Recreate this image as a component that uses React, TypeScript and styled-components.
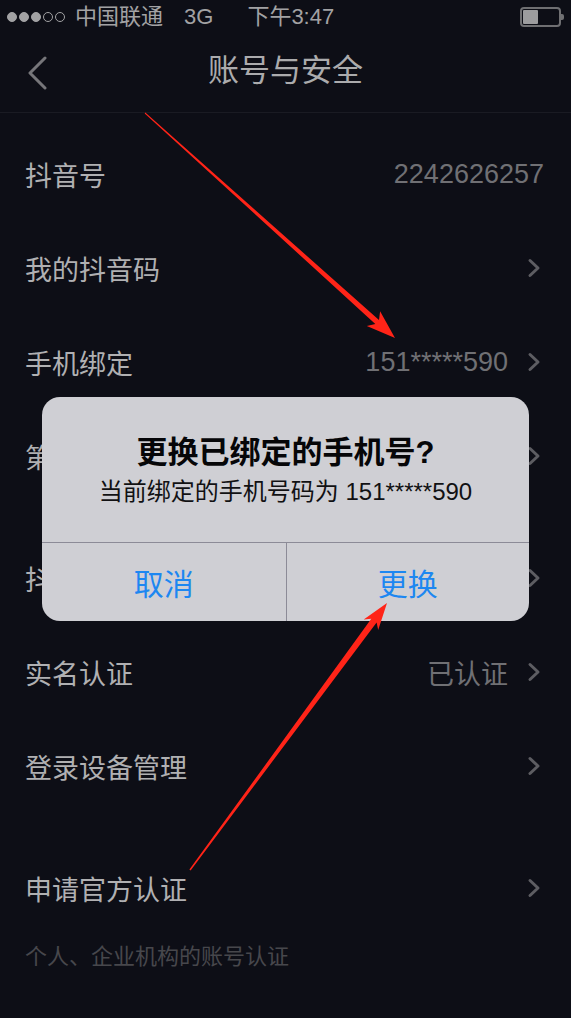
import React from "react";
import styled, { createGlobalStyle } from "styled-components";

const GlobalStyle = createGlobalStyle`
  html, body {
    margin: 0;
    padding: 0;
    background: #0d0e16;
  }
  body {
    font-family: "Liberation Sans", "Noto Sans CJK SC", sans-serif;
    -webkit-font-smoothing: antialiased;
  }
`;

const Screen = styled.div`
  position: relative;
  width: 100%;
  min-height: 1018px;
  background: #0d0e16;
  overflow: hidden;
`;

/* status bar */

const StatusBar = styled.div`
  display: flex;
  align-items: center;
  height: 34px;
  padding: 0 7px;
  color: #a2a2a4;
  font-size: 22px;
`;

const Signal = styled.div`
  display: flex;
  gap: 2px;
`;

const Dot = styled.span<{ $on: boolean }>`
  width: 8px;
  height: 8px;
  border-radius: 50%;
  border: 1.5px solid #a2a2a4;
  background: ${(p) => (p.$on ? "#a2a2a4" : "transparent")};
`;

const StatusText = styled.span<{ $gap: number }>`
  margin-left: ${(p) => p.$gap}px;
  line-height: 32px;
`;

const Battery = styled.div`
  margin-left: auto;
  display: flex;
  align-items: center;
`;

const BatteryBody = styled.div`
  width: 35px;
  height: 14px;
  border: 2px solid #6f6f72;
  border-radius: 4px;
  padding: 1px;
  display: flex;
`;

const BatteryFill = styled.div`
  width: 15px;
  background: #9c9c9e;
  border-radius: 1px;
`;

const BatteryNub = styled.div`
  width: 3px;
  height: 6px;
  background: #6f6f72;
  border-radius: 0 2px 2px 0;
`;

/* navigation */

const NavBar = styled.div`
  position: relative;
  display: flex;
  align-items: center;
  justify-content: center;
  height: 78px;
  border-bottom: 1px solid #1a1b23;
`;

const BackButton = styled.div`
  position: absolute;
  left: 26px;
  top: 22px;
  width: 24px;
  height: 34px;
`;

const NavTitle = styled.div`
  color: #ababad;
  font-size: 31px;
  line-height: 36px;
  margin-top: -4px;
`;

/* settings list */

const List = styled.div`
  padding-top: 14px;
`;

const Section = styled.div`
  & + & {
    margin-top: 28px;
  }
`;

const Row = styled.div<{ $arrow: boolean }>`
  display: flex;
  align-items: center;
  height: 94px;
  padding: 0 ${(p) => (p.$arrow ? 30 : 27)}px 0 25px;
`;

const Label = styled.div`
  flex: 1;
  color: #b0b0b2;
  font-size: 27px;
`;

const Value = styled.div`
  color: #707074;
  font-size: 27px;
`;

const Chevron = styled.svg`
  margin-left: 19px;
  width: 14px;
  height: 20px;
`;

const Note = styled.div`
  padding: 8px 25px 0;
  color: #47474c;
  font-size: 22px;
  line-height: 27px;
`;

/* alert */

const Backdrop = styled.div`
  position: absolute;
  inset: 0;
  display: flex;
  align-items: center;
  justify-content: center;
`;

const Alert = styled.div`
  width: 487px;
  border-radius: 18px;
  background: #cfcfd4;
  overflow: hidden;
`;

const AlertBody = styled.div`
  height: 145px;
  display: flex;
  flex-direction: column;
  align-items: center;
  justify-content: center;
  gap: 6px;
`;

const AlertTitle = styled.div`
  color: #060608;
  font-size: 31px;
  font-weight: 700;
  line-height: 37px;
`;

const AlertMessage = styled.div`
  color: #111113;
  font-size: 24px;
  line-height: 29px;
`;

const AlertActions = styled.div`
  display: grid;
  grid-template-columns: 1fr 1fr;
  border-top: 1px solid #8c8b97;
`;

const AlertButton = styled.div`
  height: 78px;
  display: flex;
  align-items: center;
  justify-content: center;
  color: #1d87f1;
  font-size: 30px;

  & + & {
    border-left: 1px solid #8c8b97;
  }
`;

/* red markers drawn on top */

const Markup = styled.svg`
  position: absolute;
  left: 0;
  top: 0;
  pointer-events: none;
`;

type Item = { label: string; value?: string; arrow: boolean };

const sections: Item[][] = [
  [
    { label: "抖音号", value: "2242626257", arrow: false },
    { label: "我的抖音码", arrow: true },
    { label: "手机绑定", value: "151*****590", arrow: true },
    { label: "第三方账号绑定", arrow: true },
  ],
  [
    { label: "抖音密码", arrow: true },
    { label: "实名认证", value: "已认证", arrow: true },
    { label: "登录设备管理", arrow: true },
  ],
  [{ label: "申请官方认证", arrow: true }],
];

// tapered shaft with a swept-back head, tail -> tip
function arrowShape(
  x1: number,
  y1: number,
  x2: number,
  y2: number,
  tailW: number,
  neckW: number,
  headLen: number,
  headW: number
): string {
  const len = Math.hypot(x2 - x1, y2 - y1);
  const ux = (x2 - x1) / len;
  const uy = (y2 - y1) / len;
  const nx = -uy;
  const ny = ux;
  const neckX = x2 - ux * headLen;
  const neckY = y2 - uy * headLen;
  const barbX = neckX - ux * 5;
  const barbY = neckY - uy * 5;
  const pts = [
    [x1 + (nx * tailW) / 2, y1 + (ny * tailW) / 2],
    [neckX + (nx * neckW) / 2, neckY + (ny * neckW) / 2],
    [barbX + (nx * headW) / 2, barbY + (ny * headW) / 2],
    [x2, y2],
    [barbX - (nx * headW) / 2, barbY - (ny * headW) / 2],
    [neckX - (nx * neckW) / 2, neckY - (ny * neckW) / 2],
    [x1 - (nx * tailW) / 2, y1 - (ny * tailW) / 2],
  ];
  return pts.map(([x, y]) => `${x.toFixed(1)},${y.toFixed(1)}`).join(" ");
}

const RowChevron = () => (
  <Chevron viewBox="0 0 14 20">
    <path d="M3 2.5 L11 10 L3 17.5" fill="none" stroke="#5d5d62" strokeWidth="3" strokeLinecap="round" strokeLinejoin="round" />
  </Chevron>
);

const App: React.FC = () => {
  return (
    <Screen>
      <GlobalStyle />
      <StatusBar>
        <Signal>
          {[true, true, true, false, false].map((on, i) => (
            <Dot key={i} $on={on} />
          ))}
        </Signal>
        <StatusText $gap={10}>中国联通</StatusText>
        <StatusText $gap={21}>3G</StatusText>
        <StatusText $gap={34}>下午3:47</StatusText>
        <Battery>
          <BatteryBody>
            <BatteryFill />
          </BatteryBody>
          <BatteryNub />
        </Battery>
      </StatusBar>

      <NavBar>
        <BackButton>
          <svg width="24" height="34" viewBox="0 0 24 34">
            <path d="M19 2 L4 17 L19 32" fill="none" stroke="#76767a" strokeWidth="3" strokeLinecap="round" strokeLinejoin="round" />
          </svg>
        </BackButton>
        <NavTitle>账号与安全</NavTitle>
      </NavBar>

      <List>
        {sections.map((items, si) => (
          <Section key={si}>
            {items.map((item) => (
              <Row key={item.label} $arrow={item.arrow}>
                <Label>{item.label}</Label>
                {item.value && <Value>{item.value}</Value>}
                {item.arrow && <RowChevron />}
              </Row>
            ))}
          </Section>
        ))}
        <Note>个人、企业机构的账号认证</Note>
      </List>

      <Backdrop>
        <Alert>
          <AlertBody>
            <AlertTitle>更换已绑定的手机号?</AlertTitle>
            <AlertMessage>当前绑定的手机号码为 151*****590</AlertMessage>
          </AlertBody>
          <AlertActions>
            <AlertButton>取消</AlertButton>
            <AlertButton>更换</AlertButton>
          </AlertActions>
        </Alert>
      </Backdrop>

      <Markup width="571" height="1018" viewBox="0 0 571 1018">
        <polygon points={arrowShape(145, 113, 395, 338, 1, 5.5, 24, 20)} fill="#ff2418" />
        <polygon points={arrowShape(190, 870, 387, 603, 1.5, 6.5, 22, 18)} fill="#ff2418" />
      </Markup>
    </Screen>
  );
};

export default App;
